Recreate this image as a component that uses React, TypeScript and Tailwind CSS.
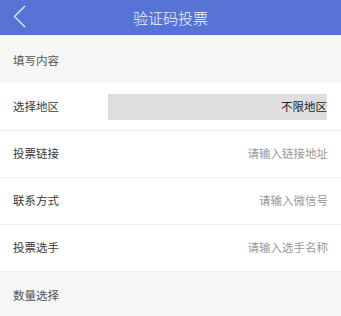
import React from 'react';

const rows = [
  { label: '投票链接', placeholder: '请输入链接地址' },
  { label: '联系方式', placeholder: '请输入微信号' },
  { label: '投票选手', placeholder: '请输入选手名称' },
];

export default function App() {
  return (
    <div
      className="w-[341px] h-[316px] overflow-hidden bg-[#f6f6f6] text-[#3a3a3a]"
      style={{ fontFamily: '"Noto Sans CJK SC", "Noto Sans", sans-serif' }}
    >
      <header className="relative h-[35px] bg-[#5873d6] flex items-center justify-center">
        <svg
          className="absolute left-[13px] top-[5px]"
          width="13"
          height="23"
          viewBox="0 0 13 23"
          fill="none"
        >
          <path d="M12 1L1.5 11.5L12 22" stroke="#e8ecfa" strokeWidth="1.3" />
        </svg>
        <h1 className="text-[15px] font-light text-[#f4f6fd] leading-none">验证码投票</h1>
      </header>

      <div className="h-[48px] flex items-center pt-[3px] px-[13px] text-[11.5px] text-[#555]">填写内容</div>

      <div className="h-[48px] bg-white flex items-center pl-[13px] pr-[14px] border-b border-[#eeeeee]">
        <span className="text-[11.5px] w-[95px]">选择地区</span>
        <div className="flex-1 h-[26px] bg-[#dedede] flex items-center justify-end text-[11.5px] text-[#222]">
          不限地区
        </div>
      </div>

      {rows.map((r) => (
        <div
          key={r.label}
          className="h-[47px] bg-white flex items-center justify-between px-[13px] border-b border-[#eeeeee] text-[11.5px]"
        >
          <span>{r.label}</span>
          <span className="text-[#999]">{r.placeholder}</span>
        </div>
      ))}

      <div className="h-[44px] flex items-center pt-[4px] px-[13px] text-[11.5px] text-[#555]">数量选择</div>
    </div>
  );
}
